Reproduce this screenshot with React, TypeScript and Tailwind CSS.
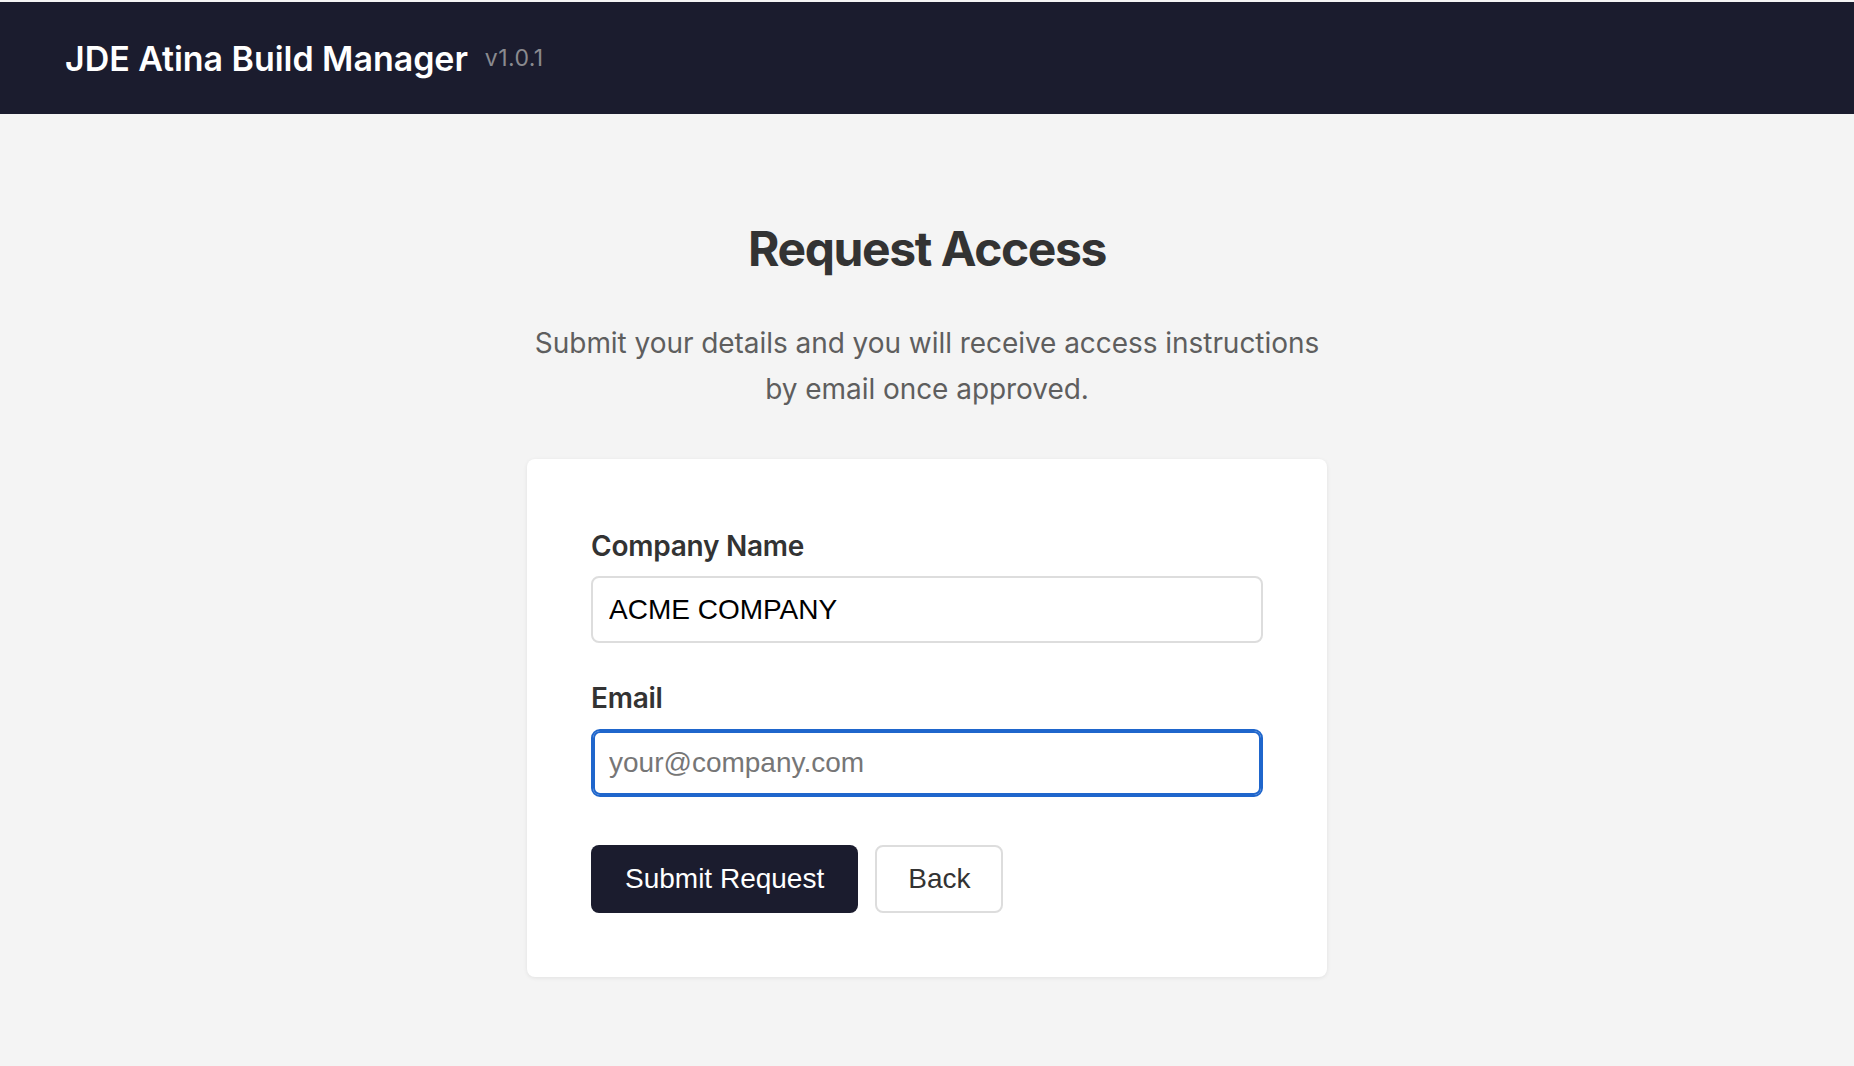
import { useState } from "react";

const sans = "font-['Inter','Noto_Sans',sans-serif]";
const arial = "font-['Liberation_Sans',Arial,sans-serif]";

function Header() {
  return (
    <header className="flex h-[112px] items-center bg-[#1b1c2e] px-[65px]">
      <h1 className={`${sans} text-[34px] font-semibold tracking-[-0.05px] text-white`}>
        JDE Atina Build Manager
      </h1>
      <span className={`${sans} ml-[17px] text-[23px] tracking-[0.4px] text-[#8a8a8f]`}>v1.0.1</span>
    </header>
  );
}

export default function App() {
  const [company, setCompany] = useState("ACME COMPANY");
  const [email, setEmail] = useState("");

  return (
    <div className="min-h-screen bg-[#f4f4f4] pt-[2px]">
      <Header />

      <main className="flex flex-col items-center pt-[106px] pb-16">
        <h2 className={`${sans} text-[48px] leading-[58px] font-bold tracking-[-1.4px] text-[#333333]`}>
          Request Access
        </h2>
        <p
          className={`${sans} mt-[42px] max-w-[800px] text-center text-[28px] leading-[46px] tracking-[-0.05px] text-[#5e5e5e]`}
        >
          Submit your details and you will receive access instructions by email once approved.
        </p>

        <form
          className="mt-[47px] w-[800px] rounded-[8px] bg-white px-[64px] pt-[67px] pb-[64px] shadow-[0_1px_4px_rgba(0,0,0,0.08)]"
          onSubmit={(e) => e.preventDefault()}
        >
          <label className={`${sans} mb-[10px] block text-[28px] leading-[40px] font-semibold tracking-[-0.25px] text-[#333333]`}>
            Company Name
          </label>
          <input
            value={company}
            onChange={(e) => setCompany(e.target.value)}
            className={`${arial} block h-[67px] w-full rounded-[8px] border-2 border-[#dddddd] bg-white px-[16px] text-[28px] text-black outline-none`}
          />

          <label className={`${sans} mt-[35px] mb-[11px] block text-[28px] leading-[40px] font-semibold tracking-[-0.25px] text-[#333333]`}>
            Email
          </label>
          <input
            type="email"
            value={email}
            onChange={(e) => setEmail(e.target.value)}
            placeholder="your@company.com"
            className={`${arial} block h-[68px] w-full rounded-[9px] border-2 border-[#1f66cc] bg-white px-[16px] text-[28px] text-black shadow-[inset_0_0_0_2px_#1f66cc] outline-none placeholder:text-[#767676]`}
          />

          <div className="mt-[48px] flex gap-[17px]">
            <button
              type="submit"
              className={`${arial} h-[68px] rounded-[8px] bg-[#1b1c2e] px-[34px] text-[28px] text-white`}
            >
              Submit Request
            </button>
            <button
              type="button"
              className={`${arial} h-[68px] rounded-[8px] border-2 border-[#dddddd] bg-white px-[31px] text-[28px] text-[#333333]`}
            >
              Back
            </button>
          </div>
        </form>
      </main>
    </div>
  );
}
